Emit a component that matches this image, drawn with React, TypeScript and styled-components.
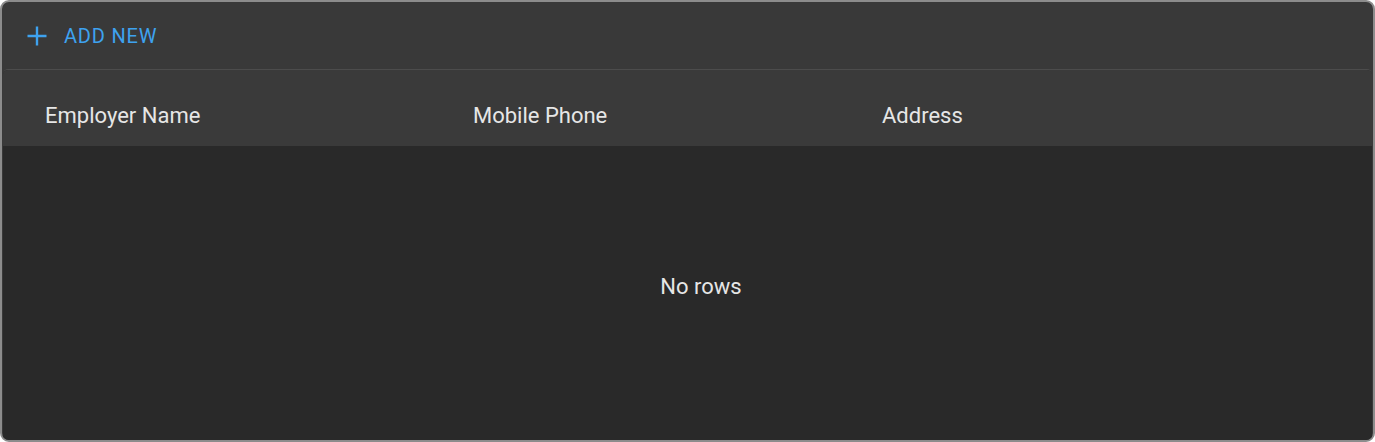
import React, { FC } from "react";
import styled, { createGlobalStyle } from "styled-components";

const GlobalStyle = createGlobalStyle`
  html, body {
    margin: 0;
    padding: 0;
    background: #ffffff;
  }
  * {
    box-sizing: border-box;
  }
`;

const Frame = styled.div`
  width: 1375px;
  height: 442px;
  display: flex;
  flex-direction: column;
  background: #393939;
  border: 2px solid #8c8c8c;
  border-radius: 9px;
  overflow: hidden;
  font-family: Roboto, "Liberation Sans", sans-serif;
`;

const Toolbar = styled.div`
  height: 67px;
  display: flex;
  align-items: center;
  padding-left: 24px;
  flex-shrink: 0;
`;

const AddButton = styled.button`
  display: flex;
  align-items: center;
  gap: 16px;
  background: none;
  border: none;
  padding: 0;
  margin-top: 1px;
  color: #3ea2ef;
  font-family: inherit;
  font-size: 20px;
  font-weight: 400;
  letter-spacing: 0.8px;
  text-transform: uppercase;
  cursor: pointer;
`;

const Table = styled.div`
  flex: 1;
  display: flex;
  flex-direction: column;
  margin: 0 1px;
  border-top: 1px solid #4c4c4c;
  border-radius: 5px 5px 0 0;
  overflow: hidden;
  background: #292929;
`;

const HeaderRow = styled.div`
  height: 76px;
  display: grid;
  grid-template-columns: 428px 409px 1fr;
  align-items: center;
  padding-top: 15px;
  background: #3a3a3a;
  flex-shrink: 0;
`;

const HeaderCell = styled.div`
  padding-left: 42px;
  color: #e6e6e6;
  font-size: 22px;
`;

const EmptyBody = styled.div`
  flex: 1;
  display: flex;
  align-items: center;
  justify-content: center;
  padding-left: 27px;
  padding-bottom: 14px;
  color: #e6e6e6;
  font-size: 22px;
`;

const columns = ["Employer Name", "Mobile Phone", "Address"];

const PlusIcon: FC = () => (
  <svg width="22" height="22" viewBox="0 0 22 22" fill="none">
    <path d="M11 1.5v19M1.5 11h19" stroke="currentColor" strokeWidth="2.4" />
  </svg>
);

const App: FC = () => (
  <>
    <GlobalStyle />
    <Frame>
      <Toolbar>
        <AddButton>
          <PlusIcon />
          Add New
        </AddButton>
      </Toolbar>
      <Table>
        <HeaderRow>
          {columns.map((c) => (
            <HeaderCell key={c}>{c}</HeaderCell>
          ))}
        </HeaderRow>
        <EmptyBody>No rows</EmptyBody>
      </Table>
    </Frame>
  </>
);

export default App;
